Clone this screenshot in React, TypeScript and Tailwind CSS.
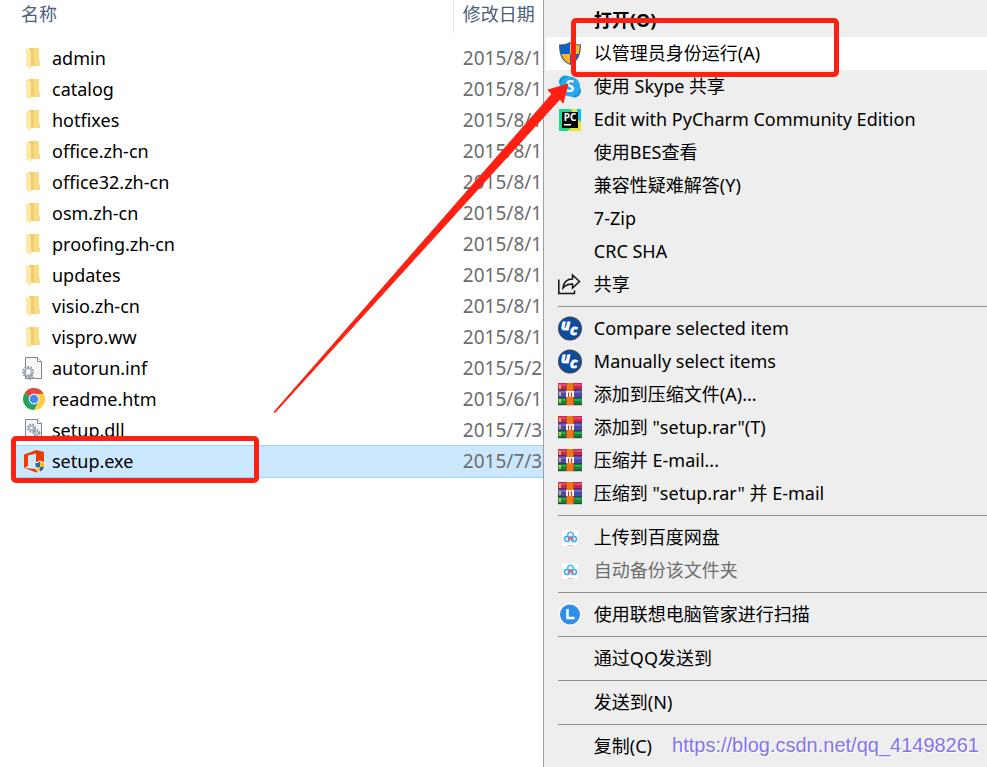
import type { ReactNode } from "react";
import { clsx } from "clsx";

type FileKind = "folder" | "inf" | "chrome" | "dll" | "office";

interface FileRow {
  name: string;
  date: string;
  kind: FileKind;
  selected?: boolean;
}

interface MenuEntry {
  label: string;
  icon?: ReactNode;
  bold?: boolean;
  active?: boolean;
  disabled?: boolean;
}

function FolderIcon() {
  return (
    <svg viewBox="0 0 24 24" className="size-6">
      <path d="M7 2h10v13l1 1v4H8z" fill="#f0cd6e" />
      <path d="M12 2h5v13l1 1v4h-6z" fill="#f9dc80" />
      <path d="M4 2l5 3v18l-5-3z" fill="#ffe9a6" />
    </svg>
  );
}

function Gear({ x, y, size }: { x: number; y: number; size: number }) {
  return (
    <g fill="none">
      <circle cx={x} cy={y} r={size} stroke="#8796a3" strokeWidth="2" strokeDasharray="1.6 1.2" />
      <circle cx={x} cy={y} r={size - 1.3} stroke="#a9b7c3" strokeWidth="1.8" />
    </g>
  );
}

function InfIcon() {
  return (
    <svg viewBox="0 0 24 24" className="size-6">
      <path d="M3.500 1.500h12l4 4v17h-16z" fill="#f7f7f7" stroke="#858585" />
      <path d="M15.500 1.500v4h4" fill="#fff" stroke="#858585" />
      <Gear x={6} y={16} size={5} />
      <Gear x={9} y={21} size={2} />
    </svg>
  );
}

function DllIcon() {
  return (
    <svg viewBox="0 0 24 24" className="size-6">
      <path d="M3.500 1.500h12l4 4v17h-16z" fill="#f7f7f7" stroke="#858585" />
      <path d="M15.500 1.500v4h4" fill="#fff" stroke="#858585" />
      <Gear x={9.5} y={10} size={3.5} />
      <Gear x={14.5} y={15} size={3} />
    </svg>
  );
}

function ChromeIcon() {
  return (
    <svg viewBox="0 0 24 24" className="size-6">
      <circle cx="12" cy="12" r="11" fill="#ffcd41" />
      <path d="M12 12L2.500 6.500A11 11 0 0 0 12 23l5-8.500z" fill="#1fa463" />
      <path d="M12 12L2.500 6.500A11 11 0 0 1 21.600 6.800L12 7z" fill="#dd4b3e" />
      <path d="M12 7h9.600A11 11 0 0 1 12 23l4.600-8.500z" fill="#ffcd41" />
      <circle cx="12" cy="12" r="5.400" fill="#f4f4f4" />
      <circle cx="12" cy="12" r="4.300" fill="#4587f3" />
    </svg>
  );
}

function OfficeIcon() {
  return (
    <svg viewBox="0 0 24 24" className="size-6">
      <path d="M2 5.500L14.500 1 22 3v18l-7.500 2.500L2 19l12 1V4.500L6 6.500V17l-4 2z" fill="#eb3c00" />
      <path d="M12 13.500q4-.3 6-2 2 1.700 6 2c0 5.500-2 8.500-6 10.200-4-1.700-6-4.700-6-10.200z" fill="#fff" />
      <path d="M13 14.300q3-.3 5-1.700V18h-4.300zM18 18h4.300c-.8 2.300-2.200 3.800-4.300 4.800z" fill="#1b6fc2" />
      <path d="M18 12.600q2 1.400 5 1.700l-.7 3.700H18zM13.700 18H18v4.800c-2.100-1-3.500-2.500-4.300-4.800z" fill="#fdb823" />
    </svg>
  );
}

function ShieldIcon() {
  return (
    <svg viewBox="0 0 24 24" className="size-6">
      <path d="M1 2.500Q8 2.500 12 0q4 2.500 11 2.500C23 13 20 19.500 12 23 4 19.500 1 13 1 2.500z" fill="#4d5c66" />
      <path d="M2.200 3.600Q8.500 3.300 12 1.200v10.800H3.500C2.600 9.500 2.200 6.500 2.200 3.600z" fill="#0b63c9" />
      <path d="M21.800 3.600Q15.500 3.300 12 1.200v10.800h8.500c.9-2.500 1.300-5.500 1.300-8.400z" fill="#fdb72e" />
      <path d="M12 12H3.500c1.500 4.700 4.300 8 8.500 9.800z" fill="#fdb72e" />
      <path d="M12 12h8.500c-1.500 4.700-4.300 8-8.500 9.800z" fill="#0b63c9" />
    </svg>
  );
}

function SkypeIcon() {
  return (
    <svg viewBox="0 0 24 24" className="size-6 overflow-visible">
      <circle cx="7.500" cy="7" r="6.500" fill="#1595dc" />
      <circle cx="16.500" cy="16" r="6.500" fill="#1595dc" />
      <circle cx="12" cy="11.500" r="10" fill="#29a9ee" />
      <text x="12" y="17" textAnchor="middle" fontSize="16" fontWeight="700" fill="#fff">S</text>
    </svg>
  );
}

function PyCharmIcon() {
  return (
    <svg viewBox="0 0 24 24" className="size-6 overflow-visible">
      <path d="M1 1h22v22H1z" fill="#21d789" />
      <path d="M13 1h10v22H9l10-7z" fill="#e8e337" />
      <path d="M19 1h4v13l-4-3z" fill="#07c3f2" />
      <path d="M4 4h16v16H4z" fill="#050505" />
      <text x="12" y="13" textAnchor="middle" fontSize="10" fontWeight="700" fill="#fff">PC</text>
      <path d="M6 16h7v1.500H6z" fill="#fff" />
    </svg>
  );
}

function ShareIcon() {
  return (
    <svg viewBox="0 0 24 24" className="size-6" fill="none" stroke="#111" strokeWidth="1.500">
      <path d="M.8 6.500v14h15.700V17.500" />
      <path d="M14.500 2l7 6.500-7 6.500v-4q-6 0-9.500 4 1-9 9.500-9z" />
    </svg>
  );
}

function CompareIcon() {
  return (
    <svg viewBox="0 0 24 24" className="size-6 overflow-visible">
      <circle cx="12" cy="11.500" r="12" fill="#3a464f" />
      <circle cx="12" cy="11.500" r="10.800" fill="#0c4da2" />
      <g fill="#fff" stroke="#fff" strokeWidth=".8" fontSize="15" fontWeight="700" fontStyle="italic">
        <text x="3" y="13">u</text>
        <text x="12" y="18">c</text>
      </g>
    </svg>
  );
}

function RarIcon() {
  return (
    <svg viewBox="0 0 24 24" className="size-6">
      <path d="M0 22h24v1H0z" fill="#c9c9c9" />
      <path d="M0 0h24v7H0z" fill="#c72650" />
      <path d="M0 1h24v2H0z" fill="#e5486f" />
      <path d="M0 7h24v8H0z" fill="#4b48a8" />
      <path d="M0 8h24v2H0z" fill="#6967c5" />
      <path d="M0 15h24v7H0z" fill="#128035" />
      <path d="M0 16h24v2H0z" fill="#27a64c" />
      <path d="M0 6h24v1H0zM0 14h24v1H0zM0 21h24v1H0z" fill="#2c2250" opacity=".6" />
      <path d="M2 2v4M2 9v4M2 16v4" stroke="#ffd43a" strokeWidth="1.500" />
      <path d="M8 0h8v22H8z" fill="#b95012" />
      <path d="M9 0h6v22H9z" fill="#f0761c" />
      <path d="M8 8h8v6H8z" fill="#f4f0ec" />
      <path d="M10.500 14V9.500M13.500 14V9.500" stroke="#c9352b" />
    </svg>
  );
}

function BaiduIcon() {
  return (
    <svg viewBox="0 0 24 24" className="size-6">
      <rect x="4" y="4" width="16" height="16" rx="3" fill="#fff" />
      <circle cx="12.500" cy="9" r="2.800" fill="none" stroke="#47bdf5" strokeWidth="1.500" />
      <circle cx="9" cy="13" r="2.500" fill="none" stroke="#35b1f5" strokeWidth="1.700" />
      <circle cx="16" cy="13" r="2.500" fill="none" stroke="#35b1f5" strokeWidth="1.700" />
      <path d="M10 14l2.500-3 3 3" fill="none" stroke="#f0506c" strokeWidth="1.600" />
      <path d="M9.500 19.500h6" stroke="#f7b0c4" />
    </svg>
  );
}

function LenovoIcon() {
  return (
    <svg viewBox="0 0 24 24" className="size-6">
      <circle cx="12" cy="11.500" r="11.500" fill="#fafafa" />
      <circle cx="12" cy="11.500" r="10" fill="#2f8eea" />
      <path d="M9.500 6v9h7" fill="none" stroke="#fff" strokeWidth="2.500" />
    </svg>
  );
}

const fileIcons: Record<FileKind, ReactNode> = {
  folder: <FolderIcon />,
  inf: <InfIcon />,
  chrome: <ChromeIcon />,
  dll: <DllIcon />,
  office: <OfficeIcon />,
};

const files: FileRow[] = [
  { name: "admin", date: "2015/8/1", kind: "folder" },
  { name: "catalog", date: "2015/8/1", kind: "folder" },
  { name: "hotfixes", date: "2015/8/1", kind: "folder" },
  { name: "office.zh-cn", date: "2015/8/1", kind: "folder" },
  { name: "office32.zh-cn", date: "2015/8/1", kind: "folder" },
  { name: "osm.zh-cn", date: "2015/8/1", kind: "folder" },
  { name: "proofing.zh-cn", date: "2015/8/1", kind: "folder" },
  { name: "updates", date: "2015/8/1", kind: "folder" },
  { name: "visio.zh-cn", date: "2015/8/1", kind: "folder" },
  { name: "vispro.ww", date: "2015/8/1", kind: "folder" },
  { name: "autorun.inf", date: "2015/5/2", kind: "inf" },
  { name: "readme.htm", date: "2015/6/1", kind: "chrome" },
  { name: "setup.dll", date: "2015/7/3", kind: "dll" },
  { name: "setup.exe", date: "2015/7/3", kind: "office", selected: true },
];

// Each inner array is one group, groups are split by a separator line
const menuGroups: MenuEntry[][] = [
  [
    { label: "打开(O)", bold: true },
    { label: "以管理员身份运行(A)", icon: <ShieldIcon />, active: true },
    { label: "使用 Skype 共享", icon: <SkypeIcon /> },
    { label: "Edit with PyCharm Community Edition", icon: <PyCharmIcon /> },
    { label: "使用BES查看" },
    { label: "兼容性疑难解答(Y)" },
    { label: "7-Zip" },
    { label: "CRC SHA" },
    { label: "共享", icon: <ShareIcon /> },
  ],
  [
    { label: "Compare selected item", icon: <CompareIcon /> },
    { label: "Manually select items", icon: <CompareIcon /> },
    { label: "添加到压缩文件(A)...", icon: <RarIcon /> },
    { label: '添加到 "setup.rar"(T)', icon: <RarIcon /> },
    { label: "压缩并 E-mail...", icon: <RarIcon /> },
    { label: '压缩到 "setup.rar" 并 E-mail', icon: <RarIcon /> },
  ],
  [
    { label: "上传到百度网盘", icon: <BaiduIcon /> },
    { label: "自动备份该文件夹", icon: <BaiduIcon />, disabled: true },
  ],
  [{ label: "使用联想电脑管家进行扫描", icon: <LenovoIcon /> }],
  [{ label: "通过QQ发送到" }],
  [{ label: "发送到(N)" }],
  [{ label: "复制(C)" }],
];

function FileList() {
  return (
    <main className="min-w-0 overflow-hidden pl-4">
      <table className="w-full table-fixed border-collapse">
        <thead>
          <tr className="h-[43px] text-left align-top text-[#4c607a]">
            <th className="p-0 font-normal">
              <div className="h-[33px] pl-[5px] leading-7">名称</div>
            </th>
            <th className="w-[90px] p-0 font-normal">
              <div className="h-[33px] border-l border-[#e5e5e5] pl-[9px] leading-7 whitespace-nowrap">修改日期</div>
            </th>
          </tr>
        </thead>
        <tbody>
          {files.map((file) => (
            <tr
              key={file.name}
              className={clsx("h-[31px]", file.selected && "bg-[#cce8ff] outline outline-[#99d1ff]")}
            >
              <td className="relative p-0">
                <div className="flex items-center gap-[6px] pb-[2px] pl-[6px] leading-6">
                  {fileIcons[file.kind]}
                  <span>{file.name}</span>
                </div>
                {file.selected && (
                  <div className="pointer-events-none absolute -top-[10px] -left-[5px] z-10 h-[47px] w-[248px] rounded-[5px] border-5 border-[#ff2012]" />
                )}
              </td>
              <td className="p-0 pb-[2px] pl-[10px] text-[19px] leading-6 whitespace-nowrap text-[#6d6d6d]">
                {file.date}
              </td>
            </tr>
          ))}
        </tbody>
      </table>
    </main>
  );
}

function MenuItem({ entry }: { entry: MenuEntry }) {
  return (
    <li className="relative">
      <button
        type="button"
        disabled={entry.disabled}
        className={clsx(
          "flex h-[33px] w-full items-center gap-3 pl-3 text-left whitespace-nowrap",
          entry.bold && "font-bold",
          entry.active && "bg-white",
          entry.disabled && "text-[#6d6d6d]"
        )}
      >
        <span className="size-6 shrink-0">{entry.icon}</span>
        {entry.label}
      </button>
      {entry.active && (
        <div className="pointer-events-none absolute -top-[19px] left-[25px] z-10 h-[59px] w-[268px] rounded-[5px] border-5 border-[#ff2012]" />
      )}
    </li>
  );
}

function ContextMenu() {
  return (
    <aside className="min-w-0 border-l border-[#a0a0a0] bg-[#eeeeee] py-1 pl-[2px]">
      {menuGroups.map((group, i) => (
        <div key={i}>
          {i > 0 && <hr className="my-[5px] ml-3 border-[#919191]" />}
          <ul>
            {group.map((entry) => (
              <MenuItem key={entry.label} entry={entry} />
            ))}
          </ul>
        </div>
      ))}
    </aside>
  );
}

export default function App() {
  return (
    <div className="relative grid min-h-screen grid-cols-[11fr_9fr] overflow-hidden bg-white font-['Noto_Sans','Noto_Sans_CJK_SC',sans-serif] text-[18px] text-black">
      <FileList />
      <ContextMenu />

      {/* Arrow from the file to the menu command */}
      <svg className="pointer-events-none absolute top-0 left-0 z-20" width="600" height="420" viewBox="0 0 600 420">
        <path d="M274 412L552 94l-4-4 20-6-5 19-3-4L275 412.500z" fill="#ff2012" stroke="#ff2012" />
      </svg>

      <a
        href="https://blog.csdn.net/qq_41498261"
        className="absolute right-2 bottom-2 font-['Liberation_Sans',sans-serif] text-[20px] leading-7 text-[#8474ee] [text-shadow:1px_1px_0_#ffffff]"
      >
        https://blog.csdn.net/qq_41498261
      </a>
    </div>
  );
}
